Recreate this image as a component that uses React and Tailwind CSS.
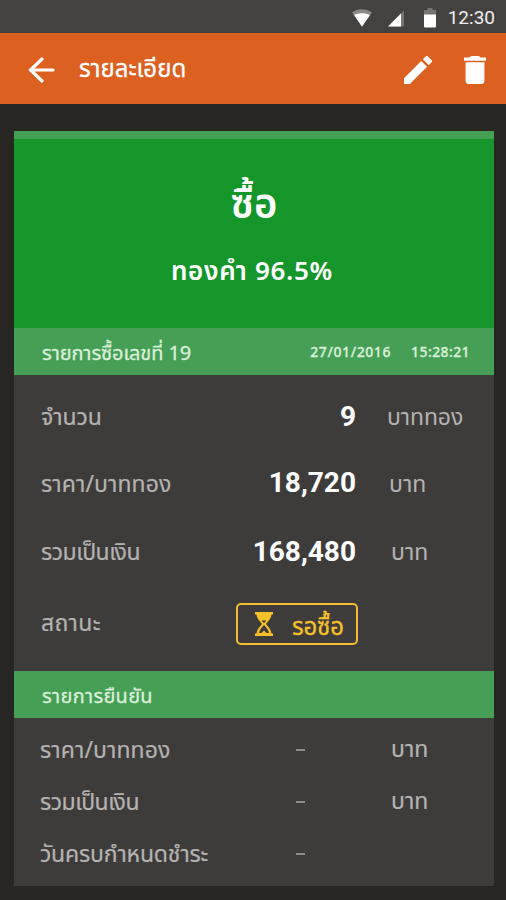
const details = [
  { label: 'จำนวน', value: '9', unit: 'บาททอง', row: 'h-[68px]', labelText: 'tracking-[-0.1px]', valuePad: 'pb-px', unitText: 'pl-[31px] tracking-[-0.1px]' },
  { label: 'ราคา/บาททอง', value: '18,720', unit: 'บาท', row: 'h-[66px]', labelText: 'tracking-[0.1px]', valuePad: 'pb-[3px]', unitText: 'pl-[33px]' },
  { label: 'รวมเป็นเงิน', value: '168,480', unit: 'บาท', row: 'h-[70px]', labelText: 'tracking-[-0.5px]', valuePad: 'pb-px', unitText: 'pl-[35px]' },
]

const confirms = [
  { label: 'ราคา/บาททอง', unit: 'บาท', labelText: 'tracking-[0.1px]' },
  { label: 'รวมเป็นเงิน', unit: 'บาท', labelText: 'tracking-[-0.5px]' },
  { label: 'วันครบกำหนดชำระ', unit: '', labelText: 'tracking-[-0.2px]' },
]

function StatusBar() {
  return (
    <div className="h-[33px] bg-[#444240] flex items-center justify-end pr-[11px] pt-[3px] text-[#eeeeee]">
      <svg width="20" height="18" viewBox="0 0 20 18">
        <path d="M0 3.500C5.500-1 14.500-1 20 3.500L10 17.500Z" fill="#8a8988" />
        <path d="M2 6C6.500 3.500 13.500 3.500 18 6L10 17.500Z" fill="#fff" />
      </svg>
      <svg className="ml-[16px]" width="16" height="17" viewBox="0 0 16 17">
        <path d="M0 16.500L16 .5V16.500Z" fill="#777574" />
        <path d="M0 16.500L13 3.500V16.500Z" fill="#fff" />
      </svg>
      <svg className="ml-5" width="12" height="20" viewBox="0 0 12 20">
        <path d="M3.500 0h5v2H12v5H0V2h3.500z" fill="#777574" />
        <path d="M0 6.500h12V18.500a1 1 0 0 1-1 1H1a1 1 0 0 1-1-1z" fill="#fff" />
      </svg>
      <span className="ml-3 font-[Roboto] text-[19px] leading-none pb-px">12:30</span>
    </div>
  )
}

function Header() {
  return (
    <header className="h-[71px] bg-[#dc6020] flex items-center pl-[28px] pr-[20px] pt-[3px] text-white">
      <svg width="28" height="26" viewBox="0 0 28 26" fill="none" stroke="#fff" strokeWidth="3.200" strokeLinecap="round">
        <path d="M14 2L2.500 13L14 24M3 13H25" />
      </svg>
      <h1 className="ml-[23px] text-[24px] leading-none [-webkit-text-stroke:0.3px]">รายละเอียด</h1>
      <svg className="ml-auto" width="28" height="28" viewBox="3 3 18 18" fill="#fff">
        <path d="M3 17.250V21h3.750L17.810 9.940l-3.750-3.750L3 17.250zM20.710 7.040a1 1 0 0 0 0-1.410l-2.340-2.340a1 1 0 0 0-1.410 0l-1.830 1.830 3.750 3.750 1.830-1.830z" />
      </svg>
      <svg className="ml-[32px]" width="22" height="28" viewBox="5 3 14 18" preserveAspectRatio="none" fill="#fff">
        <path d="M6 19c0 1.100.9 2 2 2h8c1.100 0 2-.9 2-2V7H6v12zM19 4h-3.500l-1-1h-5l-1 1H5v2h14V4z" />
      </svg>
    </header>
  )
}

function Hourglass() {
  return (
    <svg width="18" height="24" viewBox="0 0 18 24" fill="#f5c028">
      <path d="M0 0H18V2.500H16.500C16 7 13 9.500 11 12C13 14.500 16 17 16.500 21.500H18V24H0V21.500H1.500C2 17 5 14.500 7 12C5 9.500 2 7 1.500 2.500H0Z" />
      <path d="M6.500 8.500H11.500L9 11ZM9 13C11.500 15.500 13.500 18 14 21H11.500L9 18.500L6.500 21H4C4.500 18 6.500 15.500 9 13Z" fill="#3e3c3b" />
    </svg>
  )
}

export default function App() {
  return (
    <div className="w-[506px] h-[900px] overflow-hidden bg-[#282622] font-['Noto_Sans_Thai','Noto_Sans',sans-serif]">
      <StatusBar />
      <Header />
      <main className="mt-[27px] ml-[14px] w-[480px] h-[755px] bg-[#3e3c3b] text-[#b5b3b1]">
        <section className="h-[197px] border-t-8 border-[#459f54] bg-[#14962a] text-white flex flex-col items-center">
          <h2 className="mt-[44px] h-[46px] flex items-center text-[40px] leading-none font-semibold">ซื้อ</h2>
          <p className="mt-[26px] h-[34px] flex items-center text-[26px] leading-none font-semibold tracking-[0.7px] pr-[4px]">ทองคำ 96.5%</p>
        </section>

        <div className="h-[47px] bg-[#459f54] flex items-center pl-[28px] pr-[24px] text-[#dcefdc]">
          <span className="pt-[5px] text-[20px] leading-none tracking-[-0.1px] [-webkit-text-stroke:0.3px]">รายการซื้อเลขที่ 19</span>
          <span className="ml-auto pt-[3px] text-[14px] leading-none font-medium tracking-[0.6px] [-webkit-text-stroke:0.3px]">27/01/2016</span>
          <span className="ml-[20px] pt-[3px] text-[14px] leading-none font-medium tracking-[0.4px] [-webkit-text-stroke:0.3px]">15:28:21</span>
        </div>

        <div className="h-[296px] pt-2">
          {details.map(d => (
            <div key={d.label} className={`flex items-center ${d.row}`}>
              <span className={`w-[200px] pl-[27px] pt-[2px] text-[23px] leading-none [-webkit-text-stroke:0.2px] ${d.labelText}`}>{d.label}</span>
              <span className={`w-[142px] text-right font-[Roboto] font-bold text-[28px] leading-none text-white ${d.valuePad}`}>{d.value}</span>
              <span className={`pt-[2px] text-[23px] leading-none ${d.unitText}`}>{d.unit}</span>
            </div>
          ))}
          <div className="h-[74px] flex items-center">
            <span className="w-[222px] pl-[27px] text-[23px] leading-none tracking-[0.3px] [-webkit-text-stroke:0.2px]">สถานะ</span>
            <div className="w-[122px] h-[42px] border-2 border-[#f0bd35] rounded-[5px] flex items-center pl-[17px] text-[#f5c028]">
              <Hourglass />
              <span className="ml-[19px] pt-[8px] text-[24px] leading-none tracking-[-0.2px] [-webkit-text-stroke:0.3px]">รอซื้อ</span>
            </div>
          </div>
        </div>

        <div className="h-[47px] bg-[#459f54] flex items-center pl-[28px] text-[#dcefdc]">
          <span className="pt-[5px] text-[20px] leading-none tracking-[0.3px] [-webkit-text-stroke:0.3px]">รายการยืนยัน</span>
        </div>

        <div className="pt-[6px]">
          {confirms.map(c => (
            <div key={c.label} className="h-[52px] flex items-center text-[23px] leading-none [-webkit-text-stroke:0.2px]">
              <span className={`w-[282px] pl-[26px] pt-[2px] ${c.labelText}`}>{c.label}</span>
              <span className="w-[95px] flex"><i className="block w-[9px] h-[2px] bg-[#8f8d8b]" /></span>
              <span>{c.unit}</span>
            </div>
          ))}
        </div>
      </main>
    </div>
  )
}
